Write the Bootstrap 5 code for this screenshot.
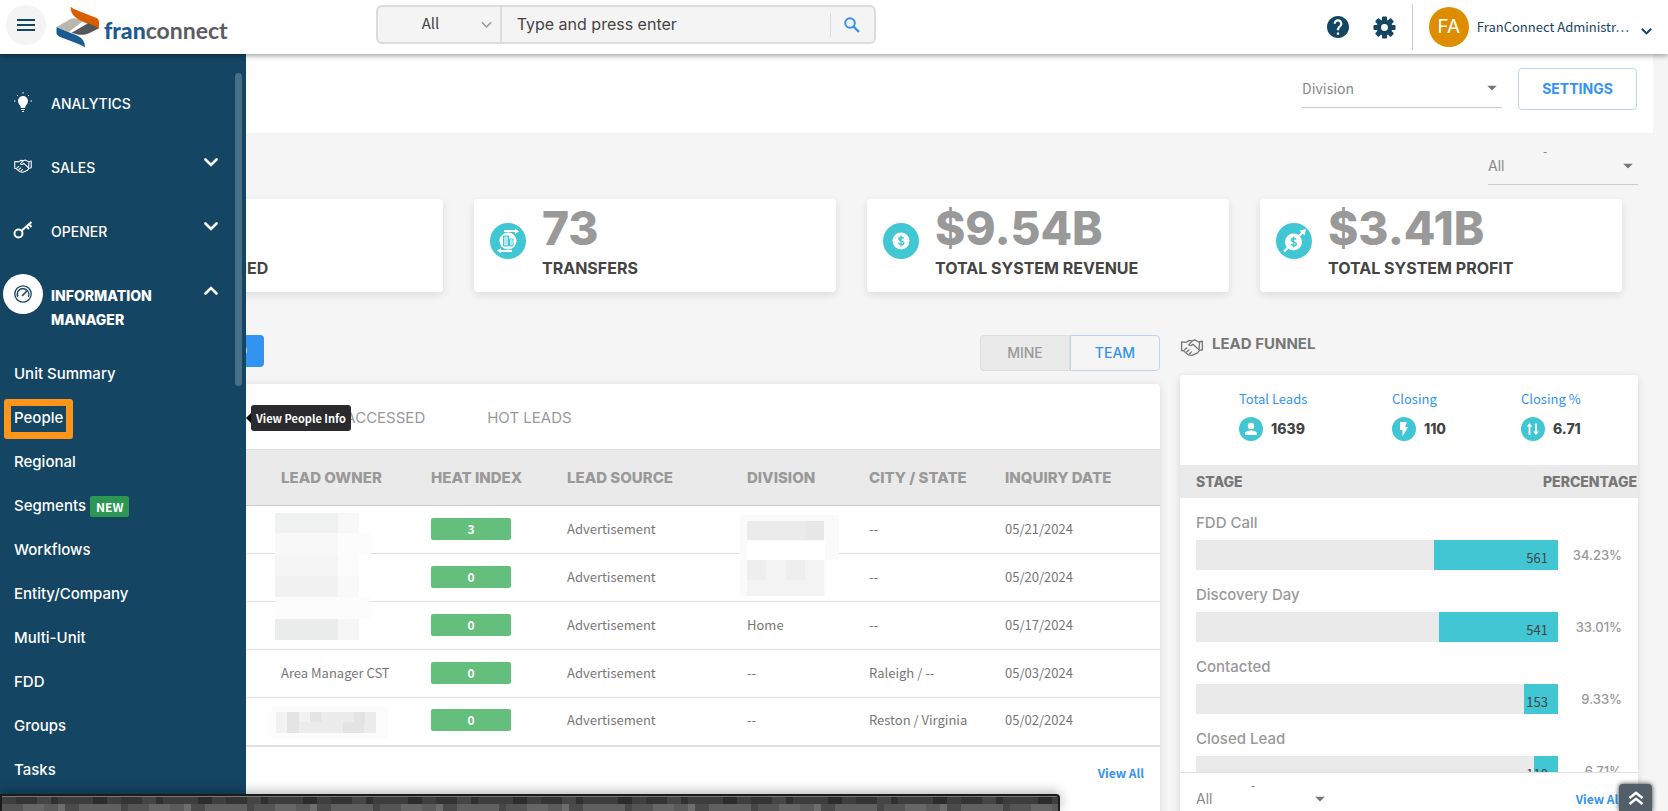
<!DOCTYPE html>
<html lang="en">
<head>
<meta charset="utf-8">
<meta name="viewport" content="width=device-width, initial-scale=1">
<title>FranConnect</title>
<link href="https://cdn.jsdelivr.net/npm/bootstrap@5.3.0/dist/css/bootstrap.min.css" rel="stylesheet">
<style>
  :root { --navy:#144563; --sky:#3393f0; --teal:#41c6d3; --mute:#999; --line:#e1e1e1; --head:#eaeaea; }
  body { background:#f5f5f5; font-family:"Noto Sans CJK SC",sans-serif; font-size:13px; line-height:20px; color:#777; }
  .mont { font-family:Inter,"Noto Sans",sans-serif; }
  a { text-decoration:none; }
  svg { display:block; flex:none; }
  button { line-height:20px; }

  /* top bar */
  .topbar { height:54px; box-shadow:0 1px 6px rgba(0,0,0,.45); z-index:30; }
  .burger { width:40px; height:40px; margin:5px 10px 9px 6px; background:#f4f4f4; }
  .brandname { font:bold 23px/30px Lato,sans-serif; color:#5b5c61; padding-top:6px; }
  .brandname b { color:#1b5b92; }
  .finder { width:500px; height:39px; border:2px solid #dcdcdc; border-radius:6px; background:#f4f4f4; overflow:hidden; margin:5px 0 10px 148px; }
  .finder select { width:124px; border:0; border-right:2px solid #dcdcdc; background:none; appearance:none; padding-left:44px; padding-bottom:3px; font-size:15px; color:#444; }
  .finder input { background:none; border:0; font-size:16px; color:#444; padding:0 15px 2px; }
  .finder input::placeholder { color:#444; opacity:1; }
  .pick { position:relative; }
  .pick > svg { position:absolute; right:5px; top:50%; transform:translateY(-50%); pointer-events:none; }
  .finder .pick > svg { right:10px; }
  .go { border:0; border-left:1px solid #dcdcdc; background:none; width:44px; height:24px; }
  .avatar { width:40px; height:40px; background:#de8c00; font-size:19px; }
  .who { color:var(--navy); font-size:13px; gap:12px; }
  .vline { width:1px; height:46px; background:#ccc; }

  /* side menu */
  .side { position:absolute; left:0; top:0; bottom:0; width:246px; background:var(--navy); z-index:20; padding-top:18px; color:#fff; }
  .side a { color:#fff; font-weight:500; }
  .side .group { display:flex; min-height:64px; padding:20px 28px 0 3px; line-height:24px; font-size:14px; }
  .side .group .ico { width:40px; height:40px; margin:-10px 8px 0 0; display:flex; align-items:center; justify-content:center; }
  .side .group .chev { margin:2px 0 0 auto; }
  .side .on { font-weight:800; }
  .side .on .ico { background:#fff; border-radius:50%; color:var(--navy); }
  .side .sub a { display:flex; align-items:center; height:44px; padding-left:14px; font-size:15px; gap:4px; }
  .thumb { position:absolute; left:235px; top:19px; width:7px; height:313px; border-radius:4px; background:#476f87; }
  .ring { position:absolute; left:4px; top:345px; width:69px; height:40px; border:7px solid #ff9518; border-radius:3px; pointer-events:none; }
  .newtag { background:#2c9752; font:bold 12px/21px "Noto Sans CJK SC",sans-serif; padding:0 6px; border-radius:2px; }
  .tip { position:absolute; left:251px; top:351px; z-index:25; background:#2b2a2c; color:#fff; font-weight:bold; font-size:11px; line-height:26px; padding:0 5px; border-radius:3px; white-space:nowrap; }
  .tip::before { content:""; position:absolute; left:-5px; top:8px; border:5px solid transparent; border-left:0; border-right-color:#000; }

  /* page */
  .strip { height:79px; margin-right:15px; padding:14px 16px 0 0; }
  .lined { border-bottom:1px solid #ccc; }
  .lined select, .bare select { width:100%; border:0; background:none; appearance:none; color:#888; padding:0; font-size:14px; }
  .hyphen { position:absolute; left:55px; top:-14px; font-size:12px; line-height:20px; }
  .lined .hyphen { top:-7px; }
  .pick-division { width:200px; height:40px; }
  .pick-period { width:150px; height:37px; }
  .btn-set { width:119px; height:42px; border:1px solid #bcd6f0; border-radius:4px; background:#fff; color:var(--sky); font-weight:700; font-size:14px; }
  .filterbar { padding:15px 30px 0 0; }
  .kpis { margin:14px 46px 0 81px; gap:31px; }
  .kpi { height:93px; background:#fff; border-radius:4px; box-shadow:0 3px 8px rgba(0,0,0,.1); padding:0 16px; display:flex; flex:1 1 0; gap:16px; }
  .kpi > svg { margin-top:24px; }
  .kpi strong { display:block; font-size:46px; line-height:44px; font-weight:800; color:#999; padding-top:7px; }
  .kpi span { display:block; font-size:16px; line-height:20px; font-weight:700; color:#444; margin-top:8px; }
  .boards { display:grid; grid-template-columns:minmax(0,1fr) 458px; gap:20px; margin:43px 30px 0 81px; }
  .sheet { background:#fff; border-radius:4px; box-shadow:0 2px 8px rgba(0,0,0,.12); }
  .sheetbar { height:49px; }
  .btn-add { background:var(--sky); color:#fff; border:0; border-radius:4px; height:32px; width:183px; text-align:right; padding:0 17px; font-weight:600; font-size:14px; }
  .toggle button { height:36px; width:90px; font-size:14px; font-weight:500; border:1px solid #bcd6f0; background:#f5f5f5; color:var(--sky); border-radius:0 4px 4px 0; }
  .toggle button.mine { border-color:#ddd; background:#eaeaea; color:#999; border-radius:4px 0 0 4px; }
  .tabs { height:65px; padding:2px 0 0 222px; gap:62px; }
  .tabs a { color:#999; font-size:15px; }
  .leads { table-layout:fixed; border-color:var(--line); }
  .leads .w1 { width:184px; } .leads .w2 { width:150px; } .leads .w3 { width:136px; } .leads .w4 { width:180px; } .leads .w5 { width:122px; }
  .leads th, .leads td { padding:0 0 0 16px; vertical-align:middle; color:#777; background:none; border-bottom:1px solid var(--line); }
  .leads td { height:48px; position:relative; padding-bottom:2px; }
  .leads th { height:56px; background:var(--head); color:#999; font-weight:800; font-size:15px; border-top:1px solid #ddd; border-bottom-color:#ccc; white-space:nowrap; }
  .leads tr:last-child td { border-bottom-width:2px; }
  .heat { display:block; width:80px; line-height:22px; text-align:center; background:#65bf7c; color:#fff; border-radius:2px; font-weight:bold; font-size:12px; }
  .veil { position:absolute; z-index:2; }
  .veil-a { left:10px; top:7px; } .veil-b { left:9px; top:9px; } .veil-c { left:5px; top:8px; }
  .viewall { color:var(--sky); font-weight:bold; font-size:12px; }

  /* funnel */
  .funnelbar { height:40px; }
  .funnel h2 { font-size:15px; line-height:18px; font-weight:700; color:#777; margin:0; }
  .facts { display:grid; grid-template-columns:153px 129px auto; height:90px; padding:14px 0 0 59px; }
  .facts a { color:var(--sky); display:block; line-height:20px; }
  .facts b { color:#444; font-size:14px; font-weight:800; }
  .stagehead { background:var(--head); height:33px; padding:0 1px 0 16px; font-size:14px; font-weight:800; color:#777; }
  .stages { height:275px; overflow:hidden; padding:15px 16px 0; border-bottom:1px solid var(--line); color:#999; }
  .stage { height:72px; font-size:15px; font-weight:500; }
  .stage > div { margin-top:7px; }
  .stage > div > span { font-size:13px; }
  .track { background:var(--head); height:30px; width:362px; }
  .fill { background:var(--teal); color:#444; font:13px/20px "Noto Sans CJK SC",sans-serif; padding:8px 10px 0 0; display:flex; justify-content:flex-end; }
  .funnelfoot { height:52px; }
  .funnelfoot .pick { width:134px; }
  .totop { position:absolute; right:16px; bottom:0; width:33px; height:27px; background:#525f68; border:0; border-radius:4px 4px 0 0; box-shadow:0 0 5px #333; z-index:31; padding:0; display:flex; justify-content:center; align-items:center; }
  .dock { position:absolute; left:0; bottom:0; width:1060px; max-width:100%; height:17px; z-index:40; border:2px solid #1b1b1b; border-bottom:0; border-radius:0 4px 0 0; box-shadow:0 -2px 12px rgba(0,0,0,.3);
    background:
      repeating-linear-gradient(90deg,#3f3f3f 0 14px,#343434 14px 35px,#454545 35px 49px,#303030 49px 56px,#3d3d3d 56px 91px,#2c2c2c 91px 105px) 0 1px/100% 7px no-repeat,
      repeating-linear-gradient(90deg,#555 0 21px,#666 21px 42px,#5b5b5b 42px 56px,#6d6d6d 56px 63px,#4b4b4b 63px 77px,#606060 77px 119px,#474747 119px 126px) 0 8px/100% 9px no-repeat,#777; }
</style>
</head>
<body>
<svg width="0" height="0" class="position-absolute" aria-hidden="true">
  <symbol id="hands" viewBox="0 0 24 18"><g fill="none" stroke="currentColor" stroke-width="1.4" stroke-linejoin="round" stroke-linecap="round"><path d="M1 3l5 .5 3-2 3 .6 3-1.2 4 2.3 4-.8v9l-3 .7-2 2.5-6 2.7-4-.5-5-4.4H1z"/><path d="M12 2.5L8.500 6c1 1.700 3 1.300 4.500-.5l6.500 6M4 11.400l2.500-2M6.500 13.500l2.500-2M9.500 15.600l2-2M20 3.500l-.5 7"/></g></symbol>
  <symbol id="down" viewBox="0 0 14 9"><path d="M1.500 1.500L7 7l5.500-5.500" fill="none" stroke="currentColor" stroke-width="2.600" stroke-linecap="round"/></symbol>
  <symbol id="tri" viewBox="0 0 10 5"><path d="M0 0h10L5 5z" fill="currentColor"/></symbol>
</svg>
<div class="d-flex flex-column vh-100 overflow-hidden position-relative">
  <header class="topbar bg-white d-flex position-relative align-items-center flex-shrink-0">
    <button class="burger btn p-0 border-0 rounded-circle d-flex align-items-center justify-content-center" aria-label="Menu"><svg width="18" height="13" fill="#144563"><path d="M0 0h18v2H0zM0 5h18v2H0zM0 10h18v2H0z"/></svg></button>
    <a href="#" class="d-flex align-items-center">
      <svg width="44" height="42" viewBox="0 0 44 42"><path d="M.5 21L15 12.800c3-1.200 6-.8 12.500 1.700L13 26 .5 21.500z" fill="#b9b6ac"/><path d="M14.500 0.500C16 2.500 20 4 24 5.500l14 5.500c4 1.600 5 2.500 5 5V22.500L28 16.200C20 12.500 14.500 9 14.500.5z" fill="#d85e00"/><path d="M15.500 26.800L32.500 17 43 22.300 32.500 27.500c-5 2.200-11 1.500-17-.7z" fill="#55565b"/><path d="M.5 21.300L16 27.500c8 3 13 5.500 13 14C27 39.500 21 37.500 16 35.500L5 31.300C1.500 29.800.5 28.500.5 26z" fill="#1b5b92"/></svg>
      <span class="brandname ms-1"><b>fran</b>connect</span>
    </a>
    <div class="finder d-flex align-items-center">
      <div class="pick h-100 d-flex"><select aria-label="Search in"><option>All</option></select><svg width="11" height="7" viewBox="0 0 14 9"><path d="M1 1l6 6 6-6" fill="none" stroke="#999" stroke-width="2"/></svg></div>
      <input class="mont flex-fill h-100" type="text" placeholder="Type and press enter" aria-label="Search">
      <button class="go d-flex align-items-center justify-content-center" aria-label="Search"><svg width="16" height="16" viewBox="0 0 16 16" fill="none" stroke="#3393f0" stroke-width="2"><circle cx="6" cy="6" r="4.800"/><path d="M9.500 9.500L15 15" stroke-width="2.400"/></svg></button>
    </div>
    <div class="ms-auto d-flex align-items-center pe-3">
      <a href="#" aria-label="Help" class="me-4"><svg width="22" height="22" viewBox="2 2 20 20"><path fill="#144563" d="M12 2C6.480 2 2 6.480 2 12s4.480 10 10 10 10-4.480 10-10S17.520 2 12 2zm1 17h-2v-2h2v2zm2.070-7.750l-.9.920C13.450 12.900 13 13.500 13 15h-2v-.5c0-1.100.45-2.100 1.170-2.830l1.240-1.260c.37-.36.590-.86.590-1.410 0-1.100-.9-2-2-2s-2 .9-2 2H8c0-2.210 1.790-4 4-4s4 1.790 4 4c0 .88-.36 1.680-.93 2.250z"/></svg></a>
      <a href="#" aria-label="Settings" class="me-3"><svg width="23" height="23" viewBox="-12 -12 24 24"><g fill="#144563"><circle r="8.200"/><g id="t"><rect x="-2.600" y="-11.500" width="5.200" height="23" rx="1"/><rect x="-11.500" y="-2.600" width="23" height="5.200" rx="1"/></g><use href="#t" transform="rotate(45)"/></g><circle r="3.600" fill="#fff"/></svg></a>
      <span class="vline"></span>
      <span class="avatar mont text-white rounded-circle d-flex align-items-center justify-content-center mx-2 ms-3">FA</span>
      <button class="who btn border-0 p-0 d-flex align-items-center">FranConnect Administr…<svg class="mt-2" width="11" height="7" viewBox="0 0 14 9"><path d="M1 1l6 6 6-6" fill="none" stroke="currentColor" stroke-width="2.600"/></svg></button>
    </div>
  </header>

  <div class="flex-fill position-relative overflow-hidden">
    <nav class="side mont">
      <a class="group" href="#"><span class="ico"><svg width="18" height="20" viewBox="0 0 18 20" fill="#fff"><path d="M9 4a5 5 0 0 0-5 5c0 3 2.500 4 3 7h4c.5-3 3-4 3-7a5 5 0 0 0-5-5zM7 17h4v1H7zM8 19h2v1H8z"/><path d="M9 0v1.500M3 3l1 1M15 3l-1 1M0 9h1.500M18 9h-1.500" stroke="#fff" stroke-width="1"/></svg></span>ANALYTICS</a>
      <a class="group" href="#"><span class="ico"><svg width="18" height="14"><use href="#hands"/></svg></span>SALES<svg class="chev" width="14" height="9"><use href="#down"/></svg></a>
      <a class="group" href="#"><span class="ico"><svg width="20" height="18" viewBox="0 0 20 18" fill="none" stroke="#fff" stroke-width="2"><circle cx="5.500" cy="12.500" r="4"/><path d="M8.500 9.800L18.500 1M13.500 5.500l2.500 2.500M16 3.300L18.500 6"/></svg></span>OPENER<svg class="chev" width="14" height="9"><use href="#down"/></svg></a>
      <a class="group on" href="#"><span class="ico flex-shrink-0"><svg width="18" height="18" viewBox="0 0 18 18" fill="none" stroke="currentColor"><circle cx="9" cy="9" r="8.200" stroke-width="1.300"/><path d="M3.500 12A6 6 0 1 1 14.500 12" stroke-width="1.200"/><path d="M4.500 11A4.500 4.500 0 0 1 12 5.500" stroke-width=".8"/><path d="M8 11l5-5" stroke-width="1.600"/></svg></span><span>INFORMATION MANAGER</span><svg class="chev" width="14" height="9" viewBox="0 0 14 9"><path d="M1.500 7.500L7 2l5.500 5.500" fill="none" stroke="#fff" stroke-width="2.600" stroke-linecap="round"/></svg></a>
      <div class="sub mt-3 pt-1">
        <a href="#">Unit Summary</a><a href="#">People</a><a href="#">Regional</a><a href="#">Segments <span class="newtag">NEW</span></a><a href="#">Workflows</a><a href="#">Entity/Company</a><a href="#">Multi-Unit</a><a href="#">FDD</a><a href="#">Groups</a><a href="#">Tasks</a>
      </div>
      <span class="thumb"></span><span class="ring"></span>
    </nav>
    <div class="tip" role="tooltip">View People Info</div>

    <main>
      <div class="strip bg-white d-flex justify-content-end gap-3">
        <div class="pick lined pick-division d-flex align-items-center"><select aria-label="Division"><option>Division</option></select><svg width="10" height="5" color="#777"><use href="#tri"/></svg></div>
        <button class="btn-set mont">SETTINGS</button>
      </div>
      <div class="filterbar d-flex justify-content-end">
        <div class="pick lined pick-period d-flex align-items-center"><span class="hyphen">-</span><select class="mont" aria-label="Period"><option>All</option></select><svg width="10" height="5" color="#777"><use href="#tri"/></svg></div>
      </div>
      <section class="kpis mont d-flex">
        <div class="kpi"><svg width="36" height="36"><circle cx="18" cy="18" r="18" fill="#41c6d3"/></svg><div><strong>12</strong><span>UNITS OPENED</span></div></div>
        <div class="kpi"><svg width="36" height="36"><circle cx="18" cy="18" r="18" fill="#41c6d3"/><circle cx="18" cy="18" r="8.500" fill="#fff"/><path d="M13.500 13h5v10h-5zM19.500 16h3.500v7h-3.500z" fill="none" stroke="#41c6d3"/><path d="M15 13v10M17 13v10M21 17v6" stroke="#41c6d3" stroke-width=".8"/><path d="M14 9V7h11V5.800l4 2.700-4 2.500V9zM22 27v2H11v1.200l-4-2.700L11 25v2z" fill="#fff"/></svg><div><strong>73</strong><span>TRANSFERS</span></div></div>
        <div class="kpi"><svg width="36" height="36"><circle cx="18" cy="18" r="18" fill="#41c6d3"/><circle cx="18" cy="18" r="8.500" fill="#fff"/><path d="M20.500 15.500c-.5-1.200-4.700-1.500-4.700.5 0 2.200 5 1.500 5 3.900 0 2.200-4.700 2-5.200.2M18 12.500v11" fill="none" stroke="#41c6d3" stroke-width="1.500"/></svg><div><strong>$9.54B</strong><span>TOTAL SYSTEM REVENUE</span></div></div>
        <div class="kpi"><svg width="36" height="36"><circle cx="18" cy="18" r="18" fill="#41c6d3"/><circle cx="17.500" cy="19" r="8.500" fill="#fff"/><path d="M20 16.500c-.5-1.200-4.700-1.500-4.700.5 0 2.200 5 1.500 5 3.900 0 2.200-4.700 2-5.200.2M17.500 13.500v11" fill="none" stroke="#41c6d3" stroke-width="1.500"/><path d="M8 28.500l4-4M22 14l5-5" stroke="#fff" stroke-width="2.400"/><path d="M23.500 7.500L30 6l-1.500 6.500z" fill="#fff"/></svg><div><strong>$3.41B</strong><span>TOTAL SYSTEM PROFIT</span></div></div>
      </section>

      <div class="boards">
        <section>
          <div class="sheetbar d-flex justify-content-between align-items-start mont">
            <button class="btn-add">ADD LEAD</button>
            <div class="toggle d-flex"><button class="mine">MINE</button><button>TEAM</button></div>
          </div>
          <div class="sheet">
            <div class="tabs mont d-flex align-items-center"><a href="#">LAST ACCESSED</a><a href="#">HOT LEADS</a></div>
            <table class="table mb-0 leads">
              <colgroup><col class="w1"><col class="w2"><col class="w3"><col class="w4"><col class="w5"><col class="w3"><col></colgroup>
              <thead class="mont"><tr><th></th><th>LEAD OWNER</th><th>HEAT INDEX</th><th>LEAD SOURCE</th><th>DIVISION</th><th>CITY / STATE</th><th>INQUIRY DATE</th></tr></thead>
              <tbody>
                <tr><td></td><td><svg class="veil veil-a" width="95" height="136" shape-rendering="crispEdges"><path fill="#fff" d="M0 0h95v136H0z"/><path fill="#f0f1f1" d="M0 0h63v20H0z"/><path fill="#f8f8f8" d="M63 0h21v20H63zM0 20h63v22H0z"/><path fill="#f5f5f5" d="M0 42h63v21H0z"/><path fill="#f1f1f1" d="M0 63h63v21H0z"/><path fill="#fcfcfc" d="M63 20h32v22H63zM63 42h21v21H63zM0 84h95v22H0z"/><path fill="#f9f9f9" d="M63 63h21v21H63z"/><path fill="#ebecec" d="M0 106h63v21H0z"/><path fill="#f6f6f6" d="M63 106h21v21H63z"/></svg></td><td><span class="heat">3</span></td><td>Advertisement</td><td><svg class="veil veil-b" width="99" height="81" shape-rendering="crispEdges"><path fill="#fafafa" d="M0 0h99v81H0z"/><path fill="#fff" d="M7 26h78v19H7z"/><path fill="#ebebeb" d="M7 6h77v19H7z"/><path fill="#e7e7e7" d="M65 6h19v19H65z"/><path fill="#f3f3f3" d="M7 45h77v36H7z"/><path fill="#eee" d="M7 45h19v20H7zM46 45h19v20H46z"/><path fill="#fff" d="M85 45h14v36H85z"/></svg></td><td>--</td><td>05/21/2024</td></tr>
                <tr><td></td><td></td><td><span class="heat">0</span></td><td>Advertisement</td><td></td><td>--</td><td>05/20/2024</td></tr>
                <tr><td></td><td></td><td><span class="heat">0</span></td><td>Advertisement</td><td>Home</td><td>--</td><td>05/17/2024</td></tr>
                <tr><td></td><td>Area Manager CST</td><td><span class="heat">0</span></td><td>Advertisement</td><td>--</td><td>Raleigh / --</td><td>05/03/2024</td></tr>
                <tr><td></td><td><svg class="veil veil-c" width="118" height="32" shape-rendering="crispEdges"><path fill="#fcfcfc" d="M0 0h118v32H0z"/><path fill="#ececec" d="M6 6h100v21H6z"/><path fill="#f2f2f2" d="M6 6h11v21H6zM29 6h11v10H29z"/><path fill="#e4e4e4" d="M17 6h12v21H17zM40 6h11v10H40zM73 16h21v11H73zM84 6h11v10H84z"/></svg></td><td><span class="heat">0</span></td><td>Advertisement</td><td>--</td><td>Reston / Virginia</td><td>05/02/2024</td></tr>
              </tbody>
            </table>
            <div class="text-end p-3 pb-5"><a class="viewall" href="#">View All</a></div>
          </div>
        </section>

        <section class="funnel">
          <div class="funnelbar d-flex gap-2 mont"><svg class="mt-1" width="24" height="17"><use href="#hands"/></svg><h2>LEAD FUNNEL</h2></div>
          <div class="sheet">
            <div class="facts">
              <div><a href="#">Total Leads</a><div class="d-flex gap-2 mt-2 align-items-center"><svg width="24" height="24"><circle cx="12" cy="12" r="12" fill="#41c6d3"/><g fill="#fff"><circle cx="12" cy="9" r="3.200"/><path d="M6 18v-1.500c0-4 12-4 12 0V18z"/></g></svg><b class="mont">1639</b></div></div>
              <div><a href="#">Closing</a><div class="d-flex gap-2 mt-2 align-items-center"><svg width="24" height="24"><circle cx="12" cy="12" r="12" fill="#41c6d3"/><path d="M8 5h7l-2 5h3l-5.500 9.500V13H8z" fill="#fff"/></svg><b class="mont">110</b></div></div>
              <div><a href="#">Closing %</a><div class="d-flex gap-2 mt-2 align-items-center"><svg width="24" height="24"><circle cx="12" cy="12" r="12" fill="#41c6d3"/><path d="M8.500 18V8M15 6.500V16" stroke="#fff" stroke-width="1.800"/><path d="M5.800 9.500L8.500 6l2.700 3.500zM12.300 14.500L15 18l2.700-3.500z" fill="#fff"/></svg><b class="mont">6.71</b></div></div>
            </div>
            <div class="stagehead mont d-flex justify-content-between align-items-center"><span>STAGE</span><span>PERCENTAGE</span></div>
            <div class="stages mont">
              <div class="stage">FDD Call<div class="d-flex justify-content-between align-items-center"><div class="track d-flex justify-content-end"><div class="fill" style="width:34.23%">561</div></div><span>34.23%</span></div></div>
              <div class="stage">Discovery Day<div class="d-flex justify-content-between align-items-center"><div class="track d-flex justify-content-end"><div class="fill" style="width:33.01%">541</div></div><span>33.01%</span></div></div>
              <div class="stage">Contacted<div class="d-flex justify-content-between align-items-center"><div class="track d-flex justify-content-end"><div class="fill" style="width:9.33%">153</div></div><span>9.33%</span></div></div>
              <div class="stage">Closed Lead<div class="d-flex justify-content-between align-items-center"><div class="track d-flex justify-content-end"><div class="fill" style="width:6.71%">110</div></div><span>6.71%</span></div></div>
            </div>
            <div class="funnelfoot d-flex justify-content-between align-items-center px-3">
              <div class="pick bare d-flex"><span class="hyphen">-</span><select class="mont" aria-label="Funnel period"><option>All</option></select><svg width="10" height="5" color="#777"><use href="#tri"/></svg></div>
              <a class="viewall" href="#">View All</a>
            </div>
          </div>
        </section>
      </div>
    </main>
  </div>
  <button class="totop" aria-label="Back to top"><svg width="16" height="14" viewBox="0 0 16 14" fill="none" stroke="#fff" stroke-width="2.600"><path d="M1.500 7L8 1.800 14.500 7M1.500 13L8 7.800 14.500 13"/></svg></button>
  <div class="dock" aria-hidden="true"></div>
</div>
<script src="https://cdn.jsdelivr.net/npm/bootstrap@5.3.0/dist/js/bootstrap.bundle.min.js"></script>
</body>
</html>
